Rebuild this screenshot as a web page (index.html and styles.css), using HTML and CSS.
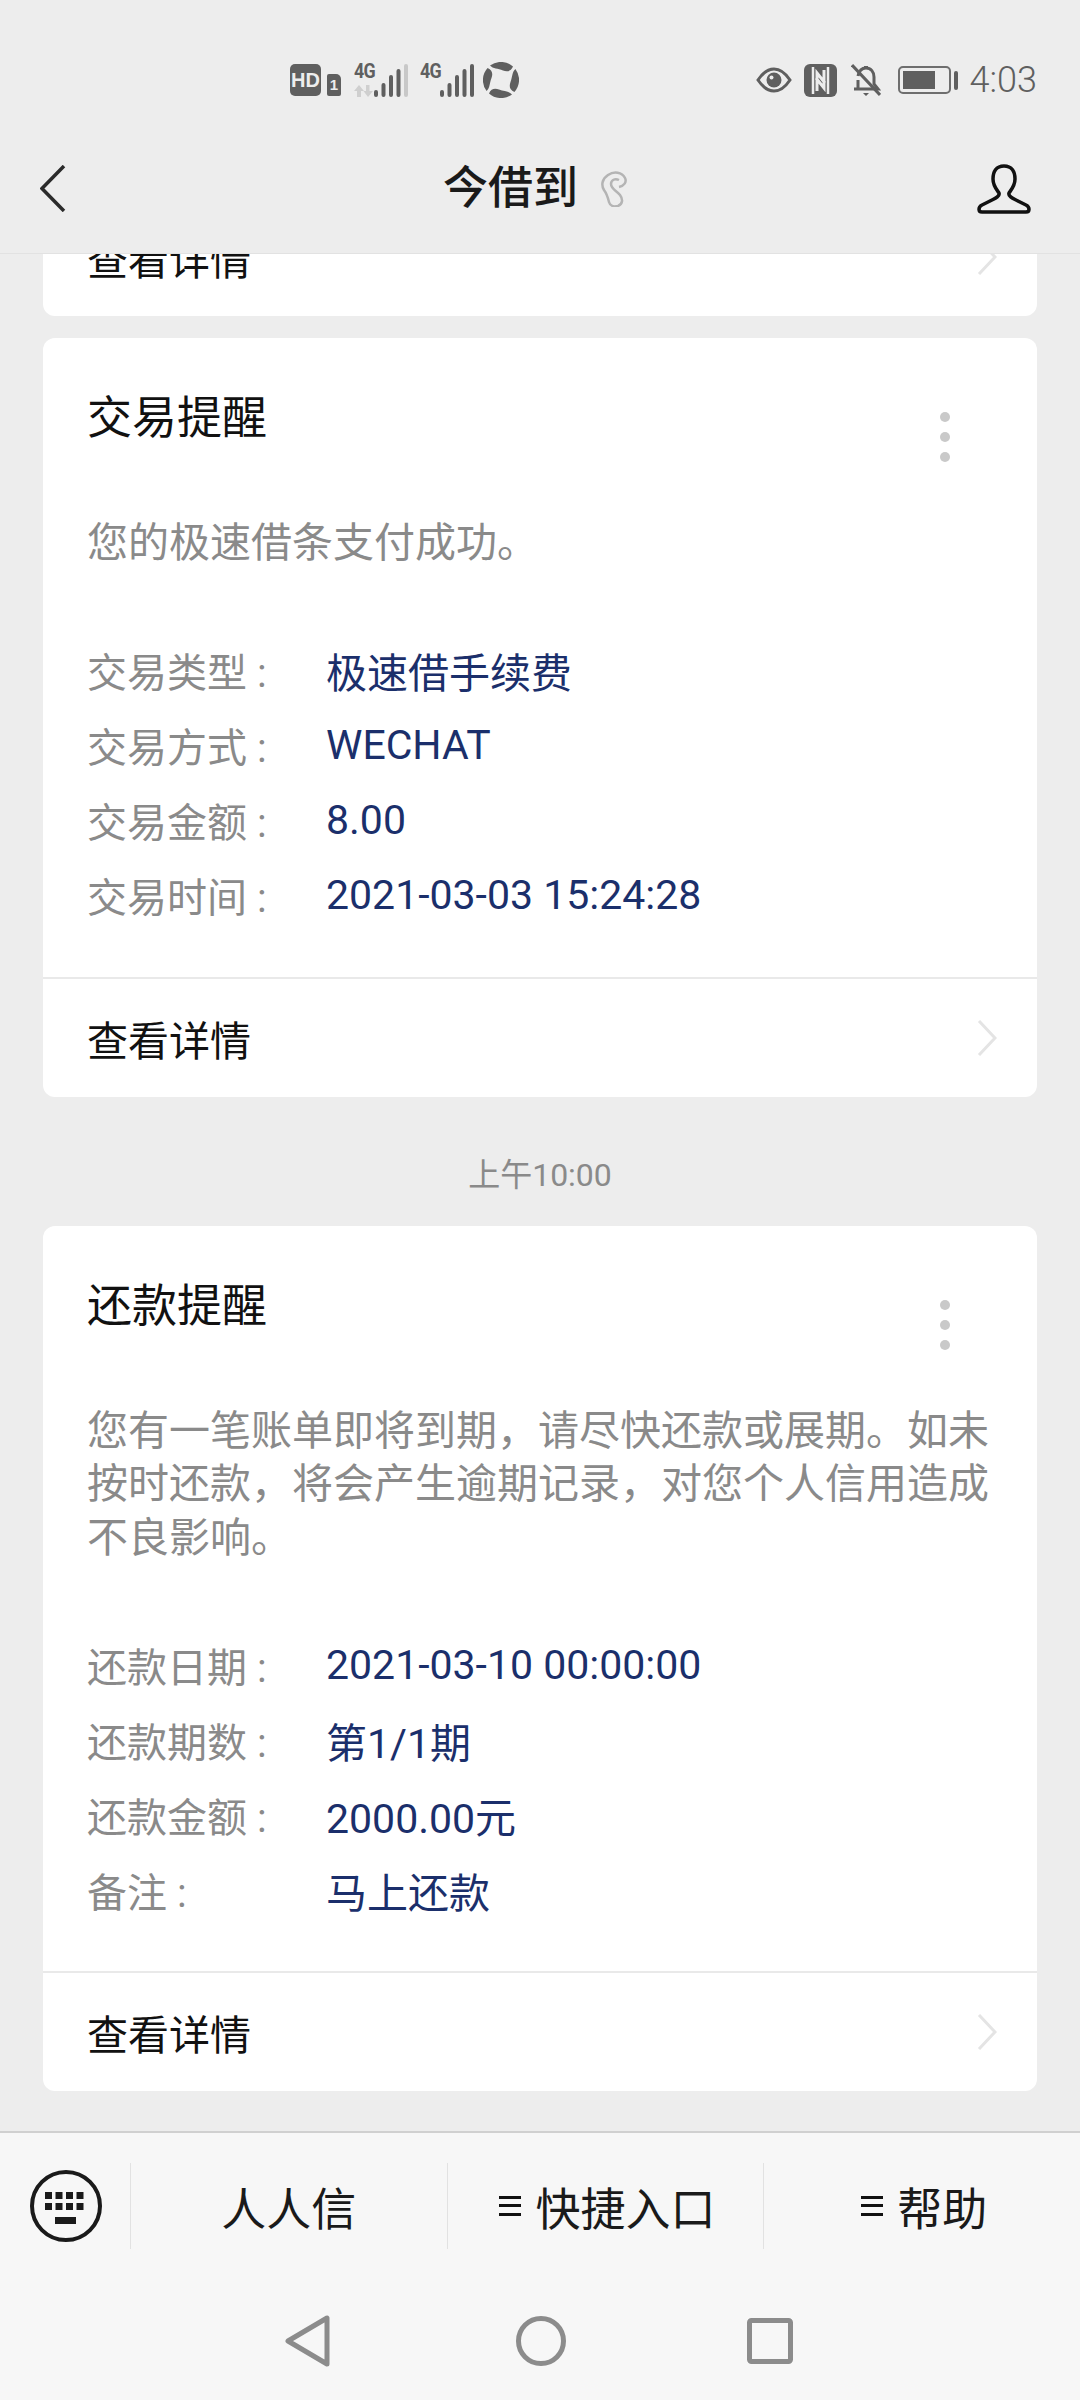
FILE: index.html
```html
<!DOCTYPE html>
<html lang="zh-CN">
<head>
    <meta charset="UTF-8">
    <meta name="viewport" content="width=device-width, initial-scale=1.0">
    <title>今借到</title>
    <link rel="stylesheet" href="styles.css">
</head>
<body>
    <header class="top">
        <div class="status">
            <div class="status-left">
                <span class="hd">HD</span>
                <span class="sim">1</span>
                <div class="signal first">
                    <div class="net">
                        <span class="net-name">4G</span>
                        <svg class="net-arrows" width="19" height="12" viewBox="0 0 19 12"><path d="M5 0 L10 6 H7 V12 H3 V6 H0 Z M14 12 L9.500 6 H12 V0 H15.500 V6 H19 Z" fill="#cfcfcf"/></svg>
                    </div>
                    <svg width="36" height="34" viewBox="0 0 36 34">
                        <g stroke="#5f5f5f" stroke-width="4" stroke-linecap="round">
                            <path d="M3 29 V32 M10.500 22 V32 M18 14 V32 M25.500 8 V32"/>
                            <path d="M33 3 V32" stroke="#c8c8c8"/>
                        </g>
                    </svg>
                </div>
                <div class="signal">
                    <div class="net"><span class="net-name">4G</span></div>
                    <svg width="36" height="34" viewBox="0 0 36 34">
                        <path d="M3 29 V32 M10.500 22 V32 M18 14 V32 M25.500 8 V32 M33 3 V32" stroke="#5f5f5f" stroke-width="4" stroke-linecap="round"/>
                    </svg>
                </div>
                <svg width="36" height="36" viewBox="0 0 36 36" fill="#5f5f5f">
                    <path d="M7 3.600 A18 18 0 0 1 30 4.600 C28 9.500 24 10 20 8.500 C15 6.500 10 7 7 3.600 Z"/>
                    <path d="M7 3.600 A18 18 0 0 1 30 4.600 C28 9.500 24 10 20 8.500 C15 6.500 10 7 7 3.600 Z" transform="rotate(90 18 18)"/>
                    <path d="M7 3.600 A18 18 0 0 1 30 4.600 C28 9.500 24 10 20 8.500 C15 6.500 10 7 7 3.600 Z" transform="rotate(180 18 18)"/>
                    <path d="M7 3.600 A18 18 0 0 1 30 4.600 C28 9.500 24 10 20 8.500 C15 6.500 10 7 7 3.600 Z" transform="rotate(270 18 18)"/>
                </svg>
            </div>
            <div class="status-right">
                <svg width="36" height="26" viewBox="0 0 36 26">
                    <path d="M2 13 C8 4 13 2 18 2 C23 2 28 4 34 13 C28 22 23 24 18 24 C13 24 8 22 2 13 Z" fill="none" stroke="#5f5f5f" stroke-width="3"/>
                    <circle cx="18" cy="13" r="7.500" fill="#5f5f5f"/>
                    <circle cx="15.500" cy="10.500" r="2" fill="#ededed"/>
                </svg>
                <svg class="nfc" width="33" height="33" viewBox="0 0 33 33">
                    <rect width="33" height="33" rx="6" fill="#5f5f5f"/>
                    <path d="M9 3 V30 M24 3 V30" stroke="#ededed" stroke-width="2.500"/>
                    <path d="M13 27 V9 L21 19 M20 6 V24 L12 14" fill="none" stroke="#ededed" stroke-width="3"/>
                </svg>
                <svg class="bell" width="30" height="33" viewBox="0 0 30 33">
                    <path d="M7 12 C8 7 11 4 15 4 C20 4 23 8 23 13 V20 L27 25 H3 H7 V16" fill="none" stroke="#5f5f5f" stroke-width="3"/>
                    <path d="M12 29 H18 L15 32 Z M13 2 H17 V5 H13 Z" fill="#5f5f5f"/>
                    <path d="M1 1 L29 31" stroke="#5f5f5f" stroke-width="3"/>
                </svg>
                <div class="battery"><div class="battery-level"></div></div>
                <span class="battery-nub"></span>
                <span class="clock">4:03</span>
            </div>
        </div>
        <nav class="navbar">
            <svg width="26" height="47" viewBox="0 0 26 47"><path d="M24 1 L2 23.500 L24 46" fill="none" stroke="#2b2b2b" stroke-width="3.500"/></svg>
            <div class="navbar-title">
                <h1>今借到</h1>
                <svg width="28" height="36" viewBox="0 0 28 36" fill="none" stroke="#b4b4b4" stroke-width="2.500">
                    <path d="M19 16 C24 15 27 11 25 7 C22 1 14 0 8 4 C2 8 1 14 4 19 C7 23 8 27 9 31 C10 35 14 36 18 35 C23 33 23 28 20 24 C17 20 11 18 11 13 C11 9 15 7 19 9"/>
                </svg>
            </div>
            <svg width="54" height="50" viewBox="0 0 54 50">
                <path d="M27 2 C19 2 16 8 16 15 C16 22 20 26 22 29 C23 32 19 34 15 36 L5 41 C1 43 1 48 5 48 H49 C53 48 53 43 49 41 L39 36 C35 34 31 32 32 29 C34 26 38 22 38 15 C38 8 35 2 27 2 Z" fill="none" stroke="#111" stroke-width="3.500"/>
            </svg>
        </nav>
    </header>

    <main class="chat">
        <div class="cut-card">
            <section class="card">
                <div class="more-row">
                    <span>查看详情</span>
                    <svg class="chevron" width="20" height="36" viewBox="0 0 20 36"><path d="M2 1 L18 18 L2 35" fill="none" stroke="#e4e4e4" stroke-width="3"/></svg>
                </div>
            </section>
        </div>

        <section class="card card-second">
            <div class="card-head">
                <h2>交易提醒</h2>
                <div class="dots"><i></i><i></i><i></i></div>
            </div>
            <p class="desc">您的极速借条支付成功。</p>
            <dl class="fields">
                <div class="field"><dt>交易类型 :</dt><dd>极速借手续费</dd></div>
                <div class="field"><dt>交易方式 :</dt><dd>WECHAT</dd></div>
                <div class="field"><dt>交易金额 :</dt><dd>8.00</dd></div>
                <div class="field"><dt>交易时间 :</dt><dd>2021-03-03 15:24:28</dd></div>
            </dl>
            <div class="more-row">
                <span>查看详情</span>
                <svg class="chevron" width="20" height="36" viewBox="0 0 20 36"><path d="M2 1 L18 18 L2 35" fill="none" stroke="#e4e4e4" stroke-width="3"/></svg>
            </div>
        </section>

        <div class="time">上午10:00</div>

        <section class="card">
            <div class="card-head">
                <h2>还款提醒</h2>
                <div class="dots"><i></i><i></i><i></i></div>
            </div>
            <p class="desc">您有一笔账单即将到期，请尽快还款或展期。如未按时还款，将会产生逾期记录，对您个人信用造成不良影响。</p>
            <dl class="fields">
                <div class="field"><dt>还款日期 :</dt><dd>2021-03-10 00:00:00</dd></div>
                <div class="field"><dt>还款期数 :</dt><dd>第1/1期</dd></div>
                <div class="field"><dt>还款金额 :</dt><dd>2000.00元</dd></div>
                <div class="field"><dt>备注 :</dt><dd>马上还款</dd></div>
            </dl>
            <div class="more-row">
                <span>查看详情</span>
                <svg class="chevron" width="20" height="36" viewBox="0 0 20 36"><path d="M2 1 L18 18 L2 35" fill="none" stroke="#e4e4e4" stroke-width="3"/></svg>
            </div>
        </section>
    </main>

    <footer class="dock">
        <div class="menu">
            <div class="menu-key">
                <svg width="72" height="72" viewBox="0 0 72 72">
                    <circle cx="36" cy="36" r="34" fill="none" stroke="#1a1a1a" stroke-width="4"/>
                    <path d="M15 22 h7 v7 h-7 z M25.500 22 h7 v7 h-7 z M36 22 h7 v7 h-7 z M46.500 22 h7 v7 h-7 z M15 33 h7 v7 h-7 z M25.500 33 h7 v7 h-7 z M36 33 h7 v7 h-7 z M46.500 33 h7 v7 h-7 z M25 47 h21 v7 h-21 z" fill="#1a1a1a"/>
                </svg>
            </div>
            <div class="menu-item">人人信</div>
            <div class="menu-item menu-item-lines"><span class="lines"></span>快捷入口</div>
            <div class="menu-item menu-item-lines"><span class="lines"></span>帮助</div>
        </div>
        <div class="sysnav">
            <svg width="46" height="52" viewBox="0 0 46 52"><path d="M42 3 V49 L3 26 Z" fill="none" stroke="#8c8c8c" stroke-width="5" stroke-linejoin="round"/></svg>
            <svg width="50" height="50" viewBox="0 0 50 50"><circle cx="25" cy="25" r="22.500" fill="none" stroke="#8c8c8c" stroke-width="5"/></svg>
            <svg class="sys-square" width="46" height="46" viewBox="0 0 46 46"><rect x="2.500" y="2.500" width="41" height="41" rx="2" fill="none" stroke="#8c8c8c" stroke-width="5"/></svg>
        </div>
    </footer>
</body>
</html>
```

FILE: styles.css
```css
* {
    box-sizing: border-box;
}
body {
    margin: 0;
    width: 1080px;
    height: 2400px;
    display: flex;
    flex-direction: column;
    overflow: hidden;
    background: #ededed;
    font-family: Roboto, "Noto Sans CJK SC", sans-serif;
}
h1, h2, p, dl, dd {
    margin: 0;
    font-weight: 400;
}

/* status bar + title */
.top {
    height: 254px;
    flex: none;
    border-bottom: 1px solid #e2e2e2;
    background: #ededed;
}
.status {
    height: 124px;
    padding: 36px 43px 0 290px;
    display: flex;
    justify-content: space-between;
    align-items: center;
}
.status-left, .status-right {
    display: flex;
    align-items: center;
}
.hd {
    width: 31px;
    height: 32px;
    border-radius: 5px;
    background: #5f5f5f;
    color: #ededed;
    font: 700 20px/32px "Liberation Sans", sans-serif;
    text-align: center;
}
.sim {
    width: 14px;
    height: 22px;
    margin: 10px 13px 0 6px;
    border-radius: 2px 5px 2px 2px;
    background: #5f5f5f;
    color: #ededed;
    font: 700 15px/22px "Liberation Sans", sans-serif;
    text-align: center;
}
.signal {
    display: flex;
    align-items: flex-end;
    height: 34px;
    margin-right: 8px;
}
.signal.first {
    margin-right: 11px;
}
.net {
    width: 19px;
    height: 34px;
    display: flex;
    flex-direction: column;
    gap: 5px;
}
.net-name {
    font: 700 21px/17px Roboto, sans-serif;
    color: #5f5f5f;
    letter-spacing: -1px;
    transform: scaleX(0.85);
    transform-origin: left;
}
.net-arrows {
    display: block;
}
.nfc {
    margin-left: 12px;
}
.bell {
    margin-left: 14px;
}
.battery {
    width: 53px;
    height: 28px;
    margin-left: 17px;
    padding: 3px;
    border: 2px solid #6e6e6e;
    border-radius: 5px;
}
.battery-level {
    width: 32px;
    height: 100%;
    background: #5f5f5f;
}
.battery-nub {
    width: 4px;
    height: 19px;
    margin-left: 3px;
    border-radius: 2px;
    background: #5f5f5f;
}
.clock {
    margin-left: 12px;
    font-size: 36px;
    font-weight: 300;
    color: #5f5f5f;
}
.navbar {
    height: 129px;
    padding: 0 49px 0 40px;
    display: flex;
    justify-content: space-between;
    align-items: center;
}
.navbar-title {
    display: flex;
    align-items: center;
    gap: 22px;
    margin-left: 28px;
}
.navbar h1 {
    font-size: 45px;
    font-weight: 500;
    line-height: 60px;
    color: #1a1a1a;
}

/* messages */
.chat {
    flex: 1;
    min-height: 0;
    padding: 0 43px;
    overflow: hidden;
    display: flex;
    flex-direction: column;
}
.cut-card {
    height: 62px;
    flex: none;
    overflow: hidden;
    display: flex;
    align-items: flex-end;
}
.cut-card .card {
    width: 100%;
}
.card {
    flex: none;
    border-radius: 12px;
    background: #fff;
}
.card-second {
    margin-top: 22px;
}
.card-head {
    height: 111px;
    padding: 51px 87px 0 44px;
    display: flex;
    justify-content: space-between;
}
.card-head h2 {
    font-size: 45px;
    line-height: 60px;
    color: #111;
}
.dots {
    margin-top: 23px;
    display: flex;
    flex-direction: column;
    gap: 10px;
}
.dots i {
    flex: none;
    width: 10px;
    height: 10px;
    border-radius: 50%;
    background: #c9c9c9;
}
.desc {
    margin-top: 68px;
    padding: 0 44px;
    font-size: 41px;
    line-height: 53.500px;
    color: #8a8a8a;
}
.fields {
    padding: 62px 44px 44px;
}
.field {
    height: 75px;
    display: flex;
    align-items: center;
    font-size: 40px;
}
.field dt {
    width: 239px;
    color: #8a8a8a;
}
.field dd {
    font-size: 41px;
    color: #1b2f6b;
}
.more-row {
    height: 120px;
    padding: 0 40px 0 44px;
    border-top: 2px solid #e9e9e9;
    display: flex;
    justify-content: space-between;
    align-items: center;
    font-size: 41px;
    color: #111;
}
.time {
    height: 129px;
    padding-top: 22px;
    flex: none;
    display: flex;
    align-items: center;
    justify-content: center;
    font-size: 32px;
    color: #8a8a8a;
}

/* bottom menu */
.dock {
    height: 269px;
    flex: none;
    border-top: 2px solid #d0d0d0;
    background: #f7f7f7;
}
.menu {
    height: 86px;
    margin-top: 30px;
    display: grid;
    grid-template-columns: 130px 1fr 1fr 1fr;
}
.menu-key {
    display: flex;
    align-items: center;
    padding-left: 30px;
}
.menu-item {
    min-width: 0;
    border-left: 1px solid #e2e2e2;
    display: flex;
    align-items: center;
    justify-content: center;
    font-size: 45px;
    color: #1a1a1a;
}
.menu-item-lines {
    gap: 14px;
    padding-left: 4px;
}
.lines {
    width: 22px;
    height: 20px;
    border-top: 3px solid #111;
    border-bottom: 3px solid #111;
    position: relative;
}
.lines::after {
    content: "";
    position: absolute;
    left: 0;
    right: 0;
    top: 5px;
    height: 3px;
    background: #111;
}
.sysnav {
    margin-top: 66px;
    padding-left: 285px;
    display: flex;
    align-items: center;
    gap: 185px;
}
.sys-square {
    margin-left: -4px;
}
```
